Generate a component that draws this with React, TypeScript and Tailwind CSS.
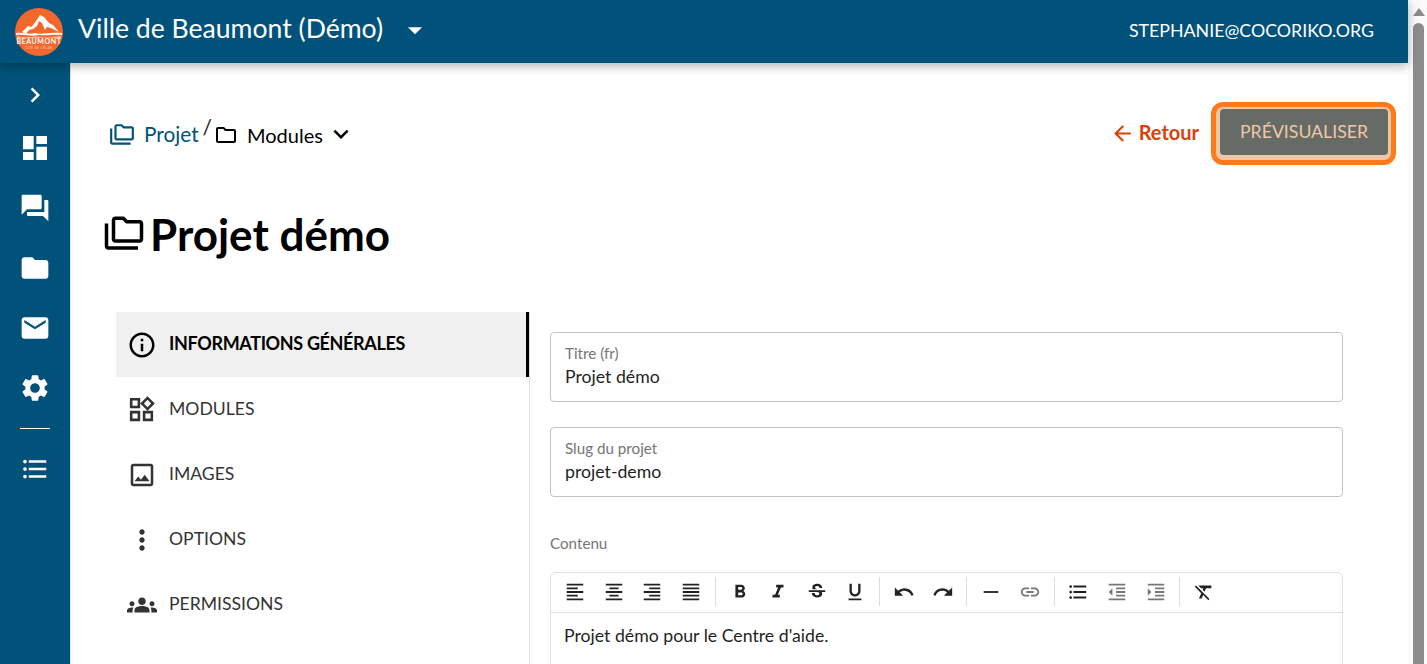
import React from "react";
import {
  MdArrowBack, MdArrowDropDown, MdChevronRight, MdDashboard, MdEmail, MdFolder, MdForum, MdFormatAlignCenter, MdFormatAlignJustify,
  MdFormatAlignLeft, MdFormatAlignRight, MdFormatBold, MdFormatClear, MdFormatIndentDecrease, MdFormatIndentIncrease, MdFormatItalic,
  MdFormatListBulleted, MdFormatUnderlined, MdGroups, MdHorizontalRule, MdInfoOutline, MdKeyboardArrowDown, MdLink, MdMoreVert,
  MdOutlineFolder, MdOutlineFolderCopy, MdOutlineImage, MdOutlineWidgets, MdRedo, MdSettings, MdStrikethroughS, MdUndo,
} from "react-icons/md";

function Logo() {
  return (
    <svg width="48" height="48" viewBox="0 0 48 48" className="shrink-0">
      <circle cx="24" cy="24" r="24" fill="#f2672c" />
      <path d="M7 24 L13 18 L16 19 L19 16 L25 7 L29 9 L34 15 L38 17 L44 24 L36 20 L32 19 L30 22 L27 15 L24 13 L22 18 L18 21 L14 22 L11 26 Z" fill="#fff" />
      <path d="M1 25 C8 24 14 27 20 25 C26 27 32 24 47 25 L47 27 C38 26 32 28 24 27 C16 29 10 26 1 27 Z" fill="#fff" />
      <path d="M2 28.5 C12 30 20 28 26 29 C34 30 40 28 46 28.5 L46 29.5 H2 Z" fill="#fff" />
      <text x="24" y="36" textAnchor="middle" fontSize="7" fontWeight="700" fill="#fff" fontFamily="Lato, sans-serif" letterSpacing="0.6">BEAUMONT</text>
      <text x="24" y="40.5" textAnchor="middle" fontSize="2.8" fill="#ffd9c4" fontFamily="Lato, sans-serif" letterSpacing="0.5">CITÉ DE L'ÉLAN</text>
    </svg>
  );
}

const sideIcons = [MdDashboard, MdForum, MdFolder, MdEmail, MdSettings];

const navItems = [
  { label: "MODULES", Icon: MdOutlineWidgets, size: 31 },
  { label: "IMAGES", Icon: MdOutlineImage, size: 30 },
  { label: "OPTIONS", Icon: MdMoreVert, size: 32 },
  { label: "PERMISSIONS", Icon: MdGroups, size: 30 },
];

function Field({ label, value }: { label: string; value: string }) {
  return (
    <div className="h-[70px] rounded-[4px] border border-[#c4c4c4] px-[14px] pt-[12px]">
      <div className="text-[15.2px] leading-[17px] text-[#757575]">{label}</div>
      <div className="mt-[4px] text-[17.7px] leading-[22px] text-[#1f1f1f]">{value}</div>
    </div>
  );
}

function Tool({ Icon, size = 22, color = "text-[#222222]" }: { Icon: React.ComponentType<{ size?: number }>; size?: number; color?: string }) {
  return (
    <div className={`flex h-[38px] w-[38.6px] items-center justify-center ${color}`}>
      <Icon size={size} />
    </div>
  );
}

function Sep() {
  return <div className="mx-[4.5px] h-[29px] w-px bg-[#dddddd]" />;
}

export default function App() {
  return (
    <div className="flex h-[664px] w-[1427px] overflow-hidden bg-white font-['Lato',sans-serif]">
      <div className="flex w-[1408px] flex-col">
        <header className="relative z-10 flex h-[63px] shrink-0 items-center bg-[#00527a] pl-[15px] pr-[34px] text-white shadow-[0_3px_10px_rgba(0,0,0,0.3)]">
          <Logo />
          <span className="mb-[6px] ml-[15px] text-[26.6px] leading-none">Ville de Beaumont (Démo)</span>
          <MdArrowDropDown size={34} className="mb-[4px] ml-[15px]" />
          <span className="mb-[2px] ml-auto text-[17.8px]">STEPHANIE@COCORIKO.ORG</span>
        </header>
        <div className="flex min-h-0 flex-1">
          <aside className="flex w-[71px] shrink-0 flex-col items-center border-r border-[#e0e0e0] bg-[#00527a] pr-px pt-[17px] text-white">
            <MdChevronRight size={30} />
            <div className="mt-[8px] flex flex-col items-center">
              {sideIcons.map((Icon, i) => (
                <div key={i} className="flex h-[60px] w-full items-center justify-center">
                  <Icon size={32} />
                </div>
              ))}
            </div>
            <div className="mt-[10px] h-px w-[30px] bg-white" />
            <div className="mt-[10px] flex h-[60px] items-center justify-center">
              <MdFormatListBulleted size={30} />
            </div>
          </aside>
          <main className="min-w-0 flex-1 pl-[33px] pr-[12px]">
            <div className="flex h-[102px] items-start justify-between pt-[39px]">
              <div className="flex items-center pl-[5px] pt-[17px] text-[20.8px] leading-[24px]">
                <MdOutlineFolderCopy size={26} className="mt-[2px] text-[#00527a]" />
                <span className="ml-[9px] text-[#00527a]">Projet</span>
                <span className="ml-[4px] -translate-y-[7px] text-[#222222]">/</span>
                <MdOutlineFolder size={24} className="ml-[2px] mt-[1px] text-black" />
                <span className="ml-[9px] mt-[1px] text-[20px] text-black">Modules</span>
                <MdKeyboardArrowDown size={30} className="ml-[3px] text-black" />
              </div>
              <div className="flex items-center">
                <div className="flex items-center text-[20px] font-bold text-[#d9420b]">
                  <MdArrowBack size={25} />
                  <span className="mb-[4px] ml-[4px]">Retour</span>
                </div>
                <div className="ml-[12px] rounded-[12px] border-[5px] border-[#ff7a1a] bg-[#efc6a8] pb-[5px] pl-[4px] pr-[3px] pt-[2px]">
                  <div className="flex h-[46px] w-[168px] items-center justify-center rounded-[4px] bg-[#666b66] text-[17.7px] text-[#f0c8a8]">PRÉVISUALISER</div>
                </div>
              </div>
            </div>
            <h1 className="-ml-px mt-[42px] flex items-center text-black">
              <MdOutlineFolderCopy size={42} className="shrink-0" />
              <span className="ml-[5px] text-[44px] font-bold leading-[54px]">Projet démo</span>
            </h1>
            <div className="mt-[51px] flex">
              <nav className="w-[426px] shrink-0 border-r border-[#e0e0e0] pl-[12px]">
                <div className="flex h-[65px] w-[413px] items-center border-r-[3px] border-black bg-[#f0f0f0] pl-[11px] text-[18px] font-bold tracking-[-0.35px] text-black">
                  <MdInfoOutline size={30} className="shrink-0 text-black" />
                  <span className="mb-[2px] ml-[12px]">INFORMATIONS GÉNÉRALES</span>
                </div>
                {navItems.map(({ label, Icon, size }) => (
                  <div key={label} className="flex h-[65px] items-center text-[17.6px] text-[#333333]">
                    <div className="mr-[2px] flex w-[51px] items-center justify-center">
                      <Icon size={size} />
                    </div>
                    <span>{label}</span>
                  </div>
                ))}
                <div className="h-[40px]" />
              </nav>
              <div className="min-w-0 flex-1 pl-[20px] pr-[53px] pt-[20px]">
                <Field label="Titre (fr)" value="Projet démo" />
                <div className="mt-[25px]">
                  <Field label="Slug du projet" value="projet-demo" />
                </div>
                <div className="mt-[38px] text-[15.2px] leading-[17px] text-[#757575]">Contenu</div>
                <div className="mt-[20px] rounded-t-[6px] border border-[#e0e0e0]">
                  <div className="flex h-[40px] items-center border-b border-[#e0e0e0] pb-[2px] pl-[5px]">
                    <Tool Icon={MdFormatAlignLeft} />
                    <Tool Icon={MdFormatAlignCenter} />
                    <Tool Icon={MdFormatAlignRight} />
                    <Tool Icon={MdFormatAlignJustify} />
                    <Sep />
                    <Tool Icon={MdFormatBold} />
                    <Tool Icon={MdFormatItalic} />
                    <Tool Icon={MdStrikethroughS} />
                    <Tool Icon={MdFormatUnderlined} />
                    <Sep />
                    <Tool Icon={MdUndo} />
                    <Tool Icon={MdRedo} />
                    <Sep />
                    <Tool Icon={MdHorizontalRule} />
                    <Tool Icon={MdLink} color="text-[#777777]" />
                    <Sep />
                    <Tool Icon={MdFormatListBulleted} />
                    <Tool Icon={MdFormatIndentDecrease} color="text-[#777777]" />
                    <Tool Icon={MdFormatIndentIncrease} color="text-[#777777]" />
                    <Sep />
                    <Tool Icon={MdFormatClear} />
                  </div>
                  <div className="h-[120px] px-[13px] pt-[11px] text-[17.7px] leading-[24px] text-[#1f1f1f]">Projet démo pour le Centre d'aide.</div>
                </div>
              </div>
            </div>
          </main>
        </div>
      </div>
      <div className="flex w-[19px] shrink-0 flex-col items-center bg-[#fafafa] pl-[2px]">
        <div className="mt-[8px] h-0 w-0 border-x-[6px] border-b-[8px] border-x-transparent border-b-[#8c8c8c]" />
        <div className="mt-[7px] w-[11px] flex-1 rounded-t-[6px] bg-[#8c8c8c]" />
      </div>
    </div>
  );
}
